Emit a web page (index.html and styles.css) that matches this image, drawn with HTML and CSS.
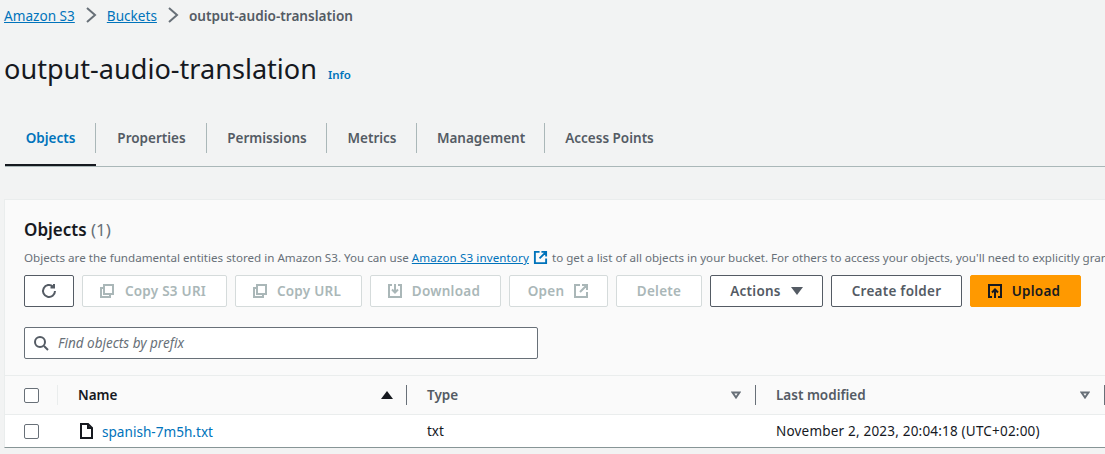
FILE: index.html
```html
<!DOCTYPE html>
<html lang="en">
<head>
    <meta charset="UTF-8">
    <title>output-audio-translation - S3 bucket</title>
    <link rel="stylesheet" href="styles.css">
</head>
<body>
    <nav class="breadcrumbs">
        <a href="#">Amazon S3</a>
        <svg class="crumb-sep" viewBox="0 0 12 16"><path d="M2 1l8 7-8 7"/></svg>
        <a href="#">Buckets</a>
        <svg class="crumb-sep" viewBox="0 0 12 16"><path d="M2 1l8 7-8 7"/></svg>
        <span>output-audio-translation</span>
    </nav>

    <header class="page-title">
        <h1>output-audio-translation</h1>
        <a href="#" class="info">Info</a>
    </header>

    <div class="tabs">
        <div class="tab active">Objects</div>
        <div class="tab">Properties</div>
        <div class="tab">Permissions</div>
        <div class="tab">Metrics</div>
        <div class="tab">Management</div>
        <div class="tab last">Access Points</div>
    </div>

    <section class="panel">
        <div class="panel-head">
            <h2>Objects <span class="count">(1)</span></h2>
            <p class="desc">Objects are the fundamental entities stored in Amazon S3. You can use <a href="#">Amazon S3 inventory</a> <svg class="ext-link" viewBox="0 0 16 16"><path d="M7 2H2v12h12V9M9 2h5v5M14 2L7 9"/></svg> to get a list of all objects in your bucket. For others to access your objects, you'll need to explicitly grant them permissions.</p>

            <div class="toolbar">
                <button class="btn refresh">
                    <svg class="icon" viewBox="0 0 16 16"><path d="M14 8a6 6 0 1 1-2-4.500M13 1v3.500H9.500"/></svg>
                </button>
                <button class="btn off copy-uri">
                    <svg class="icon" viewBox="0 0 16 16"><path d="M5 5H2v9h9v-3M5 2h9v9H5z"/></svg>Copy S3 URI
                </button>
                <button class="btn off copy-url">
                    <svg class="icon" viewBox="0 0 16 16"><path d="M5 5H2v9h9v-3M5 2h9v9H5z"/></svg>Copy URL
                </button>
                <button class="btn off download">
                    <svg class="icon" viewBox="0 0 16 16"><path d="M5 2H2v12h12V2h-3M8 1v8M5 6.500L8 9.500l3-3"/></svg>Download
                </button>
                <button class="btn off open">
                    Open<svg class="icon" viewBox="0 0 16 16"><path d="M7 2H2v12h12V9M9 2h5v5M14 2L7 9"/></svg>
                </button>
                <button class="btn off delete">Delete</button>
                <button class="btn actions">Actions<span class="caret"></span></button>
                <button class="btn create">Create folder</button>
                <button class="btn primary">
                    <svg class="icon" viewBox="0 0 16 16"><path d="M5 14H2V2h12v12h-3M8 15V7M5 9.500l3-3 3 3"/></svg>Upload
                </button>
            </div>

            <div class="search">
                <svg class="icon" viewBox="0 0 16 16"><circle cx="7" cy="7" r="5"/><path d="M11 11l4 4"/></svg>
                <span>Find objects by prefix</span>
            </div>
        </div>

        <div class="table">
            <div class="row head">
                <div class="cell check"><span class="box"></span></div>
                <div class="cell name">Name <span class="sort-up"></span></div>
                <div class="cell type">Type <svg class="sort-down" viewBox="0 0 10 8"><path d="M1.500 1.500h7L5 6.500z"/></svg></div>
                <div class="cell modified">Last modified <svg class="sort-down" viewBox="0 0 10 8"><path d="M1.500 1.500h7L5 6.500z"/></svg></div>
            </div>
            <div class="row">
                <div class="cell check"><span class="box"></span></div>
                <div class="cell name">
                    <svg class="file-icon" viewBox="0 0 13 16"><path d="M1 1h7l4 4v10H1zM8 1v4h4"/></svg>
                    <a href="#">spanish-7m5h.txt</a>
                </div>
                <div class="cell type">txt</div>
                <div class="cell modified date">November 2, 2023, 20:04:18 (UTC+02:00)</div>
            </div>
        </div>
    </section>
</body>
</html>
```

FILE: styles.css
```css
html, body {
    height: 100%;
}

body {
    margin: 0;
    overflow: hidden;
    background: #f2f3f3;
    color: #16191f;
    font-family: 'Noto Sans', sans-serif;
    font-size: 14px;
}

a {
    color: #0073bb;
}

.breadcrumbs {
    display: flex;
    align-items: center;
    height: 30px;
    padding-left: 4px;
    font-size: 13.600px;
}

.breadcrumbs span {
    color: #545b64;
    font-weight: 600;
}

.crumb-sep {
    width: 12px;
    height: 16px;
    margin: 0 10px;
    fill: none;
    stroke: #687078;
    stroke-width: 2;
}

.page-title {
    display: flex;
    align-items: baseline;
    height: 52px;
    padding: 17px 0 0 4px;
    box-sizing: border-box;
}

h1 {
    margin: 0;
    font-size: 27.100px;
    line-height: 44px;
    font-weight: 400;
}

.info {
    margin-left: 11px;
    font-size: 11.500px;
    font-weight: 600;
    text-decoration: none;
}

.tabs {
    display: flex;
    height: 43px;
    margin: 41px 0 0 5px;
    border-bottom: 1px solid #aab7b8;
}

.tab {
    position: relative;
    box-sizing: border-box;
    line-height: 30px;
    text-align: center;
    color: #545b64;
    font-weight: 600;
    font-size: 13.500px;
}

.tab:nth-child(1) { width: 91px; }
.tab:nth-child(2) { width: 111px; }
.tab:nth-child(3) { width: 120px; }
.tab:nth-child(4) { width: 90px; }
.tab:nth-child(5) { width: 128px; }
.tab:nth-child(6) { width: 129px; }

.tab::after {
    content: "";
    position: absolute;
    right: 0;
    top: 0;
    height: 30px;
    border-right: 1px solid #aab7b8;
}

.tab.last::after {
    display: none;
}

.tab.active {
    color: #0073bb;
    height: 43px;
    box-shadow: inset 0 -2px 0 #16191f;
}

.panel {
    width: 1200px;
    margin: 32px 0 0 4px;
    background: #fafafa;
    border-top: 1px solid #eaeded;
    border-left: 1px solid #eaeded;
    border-bottom: 1px solid #879596;
}

.panel-head {
    padding: 18px 0 16px 19px;
}

h2 {
    margin: 0;
    font-size: 17px;
    line-height: 24px;
    font-weight: 600;
}

.count {
    color: #687078;
    font-weight: 400;
}

.desc {
    margin: 7px 0 0;
    font-size: 11.620px;
    line-height: 18px;
    color: #687078;
    white-space: nowrap;
}

.desc a {
    letter-spacing: 0.1px;
}

.ext-link {
    width: 15px;
    height: 15px;
    margin: 0 1px;
    vertical-align: -3px;
    fill: none;
    stroke: #0073bb;
    stroke-width: 2;
}

.toolbar {
    display: flex;
    gap: 8px;
    margin-top: 8px;
}

.btn {
    display: flex;
    align-items: center;
    justify-content: center;
    gap: 9px;
    height: 32px;
    padding: 0;
    box-sizing: border-box;
    background: #fff;
    border: 1px solid #545b64;
    border-radius: 2px;
    color: #545b64;
    font-family: inherit;
    font-size: 13.500px;
    font-weight: 600;
    letter-spacing: 0.25px;
}

.btn.off {
    border-color: #d5dbdb;
    color: #aab7b8;
}

.icon {
    width: 16px;
    height: 16px;
    fill: none;
    stroke: currentColor;
    stroke-width: 2;
    flex: none;
}

.refresh { width: 50px; }
.copy-uri { width: 145px; padding-right: 4px; gap: 10px; }
.copy-url { width: 127px; padding-right: 4px; }
.download { width: 131px; padding-right: 4px; }
.open { width: 99px; }
.delete { width: 86px; }
.actions { width: 113px; gap: 10px; }
.create { width: 131px; }

.primary {
    width: 111px;
    padding-right: 4px;
    background: #ff9900;
    border-color: #ff9900;
    color: #16191f;
}

.caret {
    border-left: 6px solid transparent;
    border-right: 6px solid transparent;
    border-top: 8px solid #545b64;
}

.search {
    display: flex;
    align-items: center;
    gap: 9px;
    width: 514px;
    height: 32px;
    margin-top: 20px;
    padding-left: 8px;
    box-sizing: border-box;
    background: #fff;
    border: 1px solid #687078;
    border-radius: 2px;
    color: #687078;
    font-style: italic;
    font-size: 13.500px;
}

.search .icon {
    color: #545b64;
}

.table {
    background: #fff;
}

.row {
    display: flex;
    align-items: center;
    height: 32px;
    border-top: 1px solid #eaeded;
}

.row.head {
    height: 38px;
    background: #fafafa;
    font-weight: 600;
    color: #545b64;
}

.cell {
    display: flex;
    align-items: center;
    box-sizing: border-box;
    height: 20px;
    font-size: 13.500px;
}

.check {
    width: 53px;
    padding-left: 19px;
}

.head .check {
    border-right: 1px solid #eaeded;
}

.box {
    width: 13px;
    height: 13px;
    background: #fff;
    border: 1px solid #687078;
    border-radius: 2px;
}

.name {
    width: 349px;
    padding: 0 13px 0 20px;
    gap: 9px;
}

.head .name {
    color: #16191f;
    border-right: 1px solid #687078;
    justify-content: space-between;
}

.name a {
    text-decoration: none;
    font-size: 13.600px;
}

.file-icon {
    width: 13px;
    height: 16px;
    margin-left: 2px;
    fill: none;
    stroke: #16191f;
    stroke-width: 2;
}

.type,
.modified {
    width: 349px;
    padding: 0 14px 0 20px;
    color: #16191f;
}

.head .type,
.head .modified {
    color: #545b64;
    border-right: 1px solid #687078;
    justify-content: space-between;
}

.date {
    letter-spacing: 0.2px;
}

.sort-up {
    border-left: 6px solid transparent;
    border-right: 6px solid transparent;
    border-bottom: 8px solid #16191f;
}

.sort-down {
    width: 10px;
    height: 8px;
    fill: none;
    stroke: #687078;
    stroke-width: 2;
}
```
